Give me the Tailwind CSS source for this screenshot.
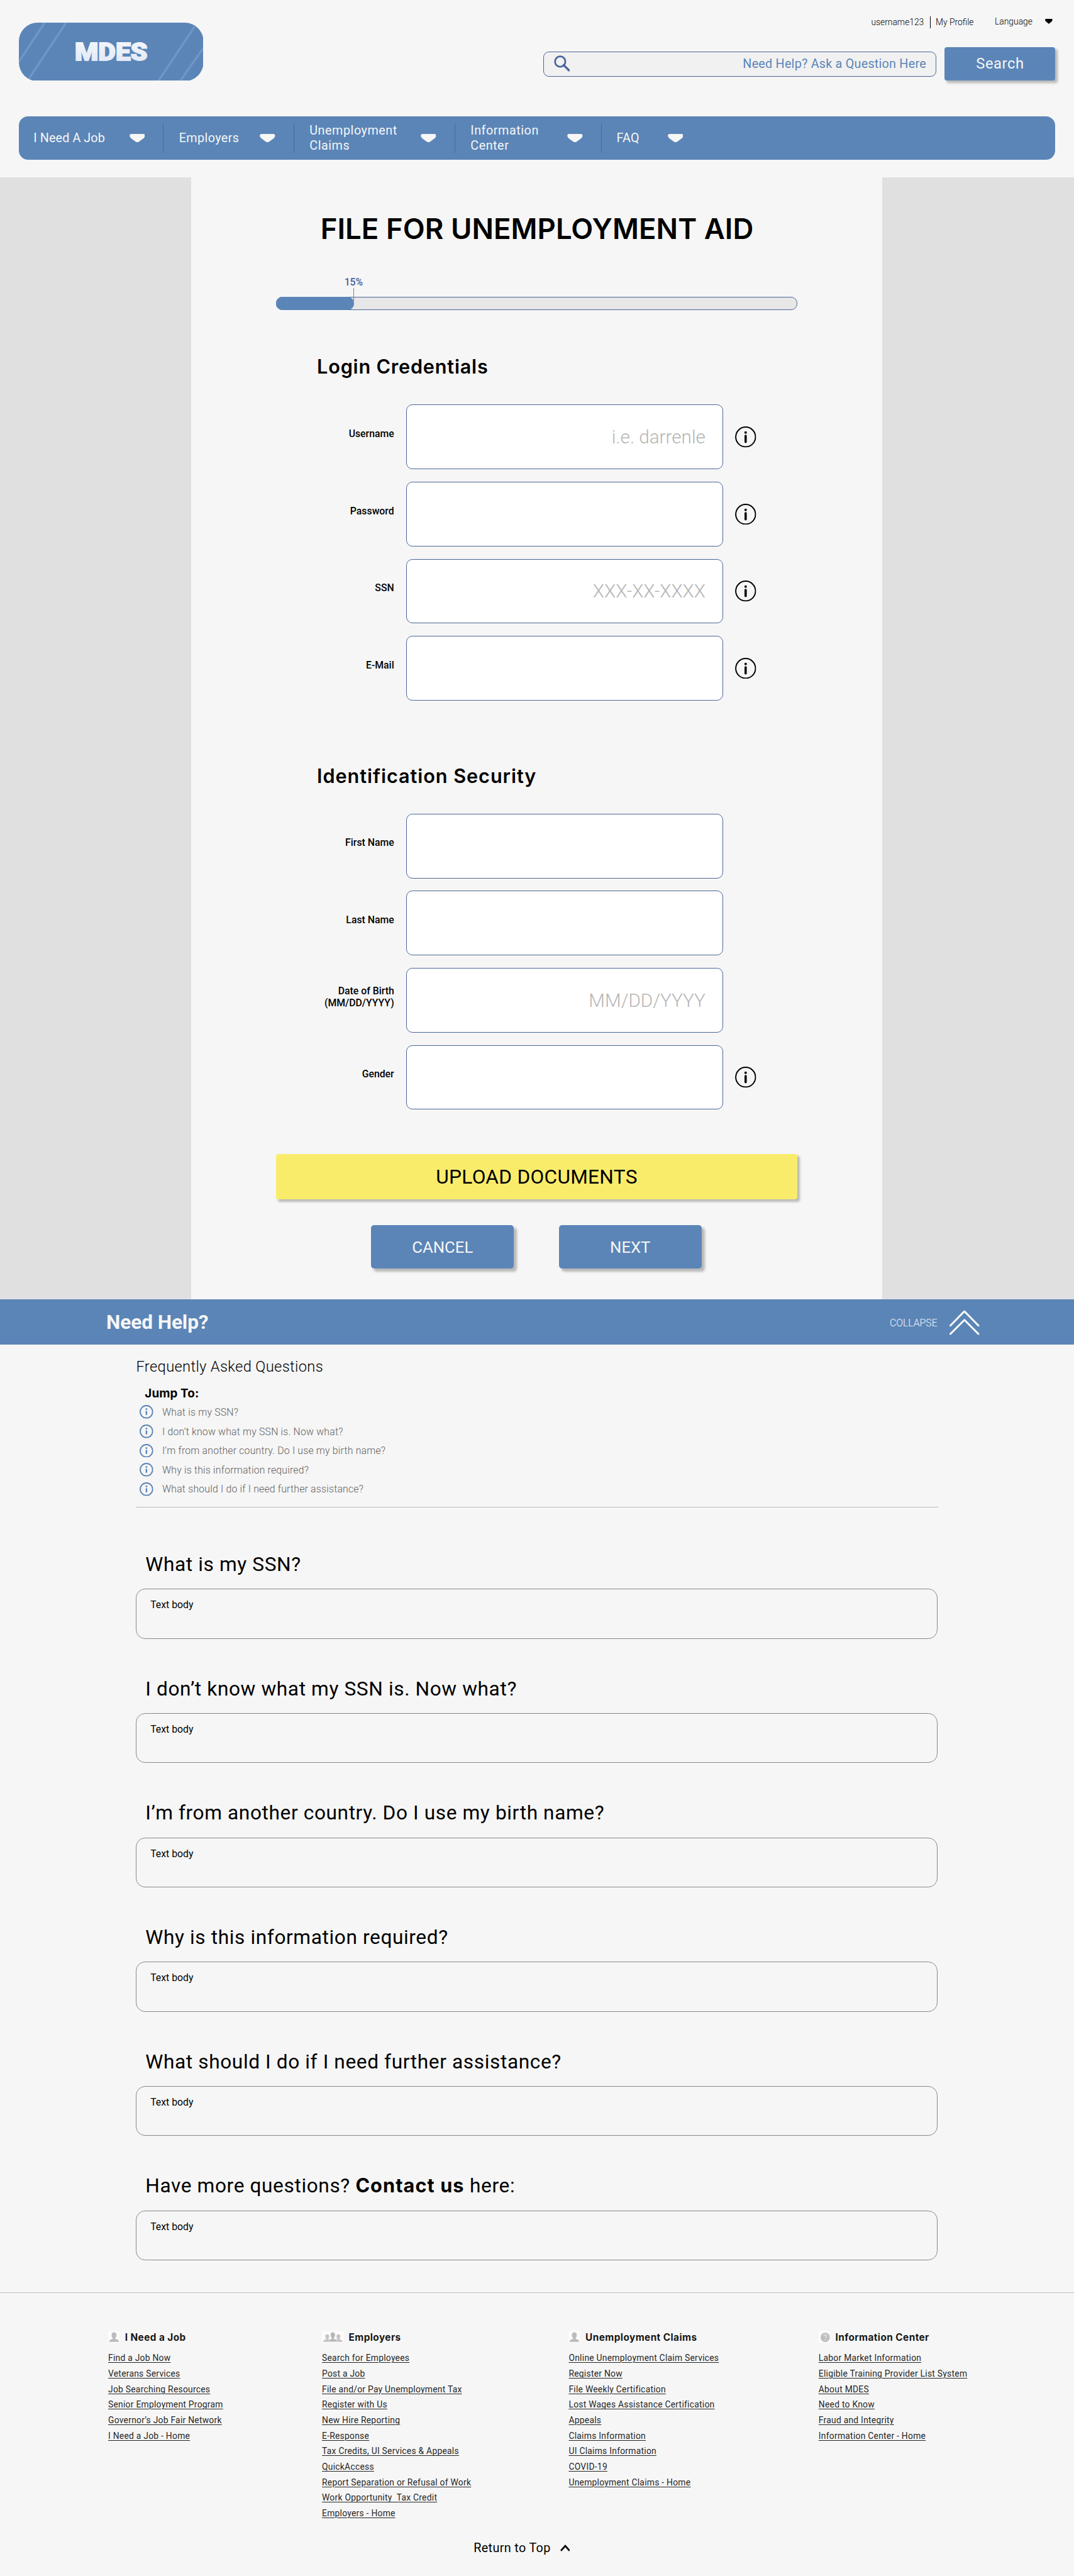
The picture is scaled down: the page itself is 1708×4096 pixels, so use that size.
<!DOCTYPE html>
<html lang="en">
<head>
<meta charset="utf-8">
<title>MDES - File for Unemployment Aid</title>
<script src="https://cdn.jsdelivr.net/npm/@tailwindcss/browser@4"></script>
</head>
<body class="bg-[#f6f6f6] overflow-x-hidden">
<svg class="hidden">
  <symbol id="caret" viewBox="0 0 25 14"><path d="M2.500 0H22.500Q25 0 24.800 3Q24.500 5.500 22.500 7L14.500 13Q12.500 14.600 10.500 13L2.500 7Q.5 5.500 .2 3Q0 0 2.500 0Z" fill="currentColor"/></symbol>
  <symbol id="info" viewBox="0 0 34 34"><circle cx="17" cy="17" r="15.900" fill="none" stroke="currentColor" stroke-width="2"/><circle cx="17" cy="9.900" r="2" fill="currentColor"/><path d="M17 15.300V25" stroke="currentColor" stroke-width="3.600" stroke-linecap="round"/></symbol>
  <symbol id="info-sm" viewBox="0 0 22 22"><circle cx="11" cy="11" r="10" fill="none" stroke="currentColor" stroke-width="1.900"/><circle cx="11" cy="6.700" r="1.500" fill="currentColor"/><path d="M11 9.500V16" stroke="currentColor" stroke-width="2.400"/></symbol>
  <symbol id="person" viewBox="0 0 19 19"><rect width="19" height="19" fill="#fcfcfc"/><path d="M9.500 1.500c2.600 0 4 1.700 4 4.200 0 2-.7 3.900-1.900 5v1.100l4.200 1.800c1 .5 1.400 1.500 1.400 3.400H1.800c0-1.900.4-2.900 1.400-3.400l4.200-1.800v-1.100c-1.200-1.100-1.900-3-1.900-5 0-2.500 1.400-4.200 4-4.200z" fill="#bcbcbc"/></symbol>
  <symbol id="people" viewBox="0 0 35 19"><rect width="35" height="19" fill="#fcfcfc"/><g fill="#c4c4c4"><path d="M8.500 4.500c2 0 3.200 1.300 3.200 3.300 0 1.500-.5 2.900-1.400 3.700v1l3.200 1.400V17H2c0-1.600.3-2.400 1.100-2.800l3.600-1.500v-1.100C5.800 10.800 5.300 9.300 5.300 7.800c0-2 1.200-3.300 3.200-3.300z"/><path d="M26.500 4.500c2 0 3.200 1.300 3.200 3.300 0 1.500-.5 2.900-1.400 3.700v1.100l3.600 1.500c.8.400 1.100 1.200 1.100 2.900H21.500v-3l3.200-1.500v-1c-.9-.8-1.400-2.200-1.400-3.700 0-2 1.200-3.300 3.200-3.300z"/></g><path d="M17.500 1.200c2.600 0 3.900 1.700 3.900 4.200 0 2-.7 3.900-1.900 5v1.300l3.500 1.700c1 .5 1.300 1.400 1.300 3.600H10.700c0-2.200.3-3.100 1.300-3.600l3.500-1.700v-1.300c-1.200-1.100-1.900-3-1.900-5 0-2.500 1.300-4.200 3.900-4.200z" fill="#b8b8b8" stroke="#fcfcfc" stroke-width=".6"/></symbol>
  <symbol id="question" viewBox="0 0 19 19"><rect width="19" height="19" fill="#fcfcfc"/><circle cx="10.500" cy="9.500" r="7.600" fill="#bcbcbc"/><circle cx="10.500" cy="9.500" r="5.700" fill="none" stroke="#d0d0d0" stroke-width=".8"/><path d="M8.500 7.700c0-1.300.9-2 2.100-2s2.100.8 2.100 1.900c0 1.500-1.900 1.600-1.900 3.200" fill="none" stroke="#ececec" stroke-width="1.400"/><circle cx="10.700" cy="13" r=".9" fill="#ececec"/></symbol>
</svg>

<div class="w-[1728px] h-[4143px] [zoom:0.98848] bg-[#f6f6f6] text-black font-['Roboto',sans-serif] overflow-hidden">

  <header class="h-[285px] px-[30px]">
    <div class="flex justify-between h-[187px]">
      <svg class="mt-9 w-[297px] h-[94px]" viewBox="0 0 297 94">
        <defs>
          <clipPath id="pill"><rect width="297" height="94" rx="30"/></clipPath>
          <linearGradient id="ink" x1="0" y1="0" x2="0" y2="1"><stop offset="0" stop-color="#f6f7fb"/><stop offset="1" stop-color="#dfe7f6"/></linearGradient>
        </defs>
        <g clip-path="url(#pill)">
          <rect width="297" height="94" fill="#5b85b7"/>
          <path d="M43.500-3L-2 66M78-3L13.500 94M289-3L221 99M301.500 34L256 99" stroke="#6e97c8" stroke-width="3.500" fill="none"/>
        </g>
        <text x="90" y="61" font-family="Roboto" font-weight="900" font-size="39" textLength="117" lengthAdjust="spacingAndGlyphs" fill="url(#ink)" stroke="url(#ink)" stroke-width="1.800">MDES</text>
      </svg>
      <div class="w-[824px] pt-[26px]">
        <div class="flex justify-end items-center h-5 text-sm font-light pr-[5px]">
          <span>username123</span>
          <span class="w-px h-[19px] bg-black ml-2.5 mr-2"></span>
          <span>My Profile</span>
          <span class="ml-[34px] mb-px">Language</span>
          <svg class="ml-5 w-3 h-[8px] mb-[3px]" viewBox="0 0 25 14" preserveAspectRatio="none"><use href="#caret" width="25" height="14"/></svg>
        </div>
        <div class="flex gap-3.5 mt-[30px]">
          <div class="mt-[7px] w-[632px] h-10 rounded-[9px] border border-[#4a6698] bg-[#f1f1f1] flex items-center justify-between pl-4 pr-[15px]">
            <svg class="w-[26px] h-[26px] mt-[-1px]" viewBox="0 0 26 26" fill="none" stroke="#4a65a0"><circle cx="10" cy="10" r="8.300" stroke-width="2.800"/><path d="M15.500 15.500L24 24" stroke-width="3.400" stroke-linecap="round"/></svg>
            <span class="mt-px text-xl tracking-[0.24px] text-[#5b85b7]">Need Help? Ask a Question Here</span>
          </div>
          <div class="w-[178px] h-[54px] rounded bg-[#5b85b7] text-[#f6f6f6] text-2xl tracking-[0.6px] flex items-center justify-center pt-px shadow-[4px_4px_4px_rgba(0,0,0,0.25)]">Search</div>
        </div>
      </div>
    </div>
    <nav class="flex h-[70px] rounded-[15px] bg-[#5b85b7] text-[#f6f6f6] text-xl leading-6 tracking-[0.4px] items-center">
      <div class="flex items-center justify-between w-[233px] h-12 pl-[24px] pr-[29px] border-r-2 border-[#4a6698]"><span class="mt-px tracking-[0.1px]">I Need A Job</span><svg class="w-[25px] h-[14px]"><use href="#caret"/></svg></div>
      <div class="flex items-center justify-between w-[210px] h-12 pl-[25px] pr-[29px] border-r-2 border-[#4a6698]"><span class="mt-px">Employers</span><svg class="w-[25px] h-[14px]"><use href="#caret"/></svg></div>
      <div class="flex items-center justify-between w-[259px] h-12 pl-[25px] pr-[29px] border-r-2 border-[#4a6698]"><span class="mt-px tracking-[0.55px]">Unemployment<br>Claims</span><svg class="w-[25px] h-[14px]"><use href="#caret"/></svg></div>
      <div class="flex items-center justify-between w-[236px] h-12 pl-[25px] pr-[29px] border-r-2 border-[#4a6698]"><span class="mt-px tracking-[0.55px]">Information<br>Center</span><svg class="w-[25px] h-[14px]"><use href="#caret"/></svg></div>
      <div class="flex items-center justify-between w-[131px] h-12 pl-[24px]"><span class="mt-px tracking-[0.2px]">FAQ</span><svg class="w-[25px] h-[14px]"><use href="#caret"/></svg></div>
    </nav>
  </header>

  <main class="bg-[#e0e0e0] h-[1805px] pl-[308px]">
    <div class="w-[1111px] h-full bg-[#f6f6f6] pt-[55px]">
      <h1 class="text-center text-[46px] leading-[56px] font-['Inter'] font-semibold tracking-[0.050px] pl-px">FILE FOR UNEMPLOYMENT AID</h1>
      <div class="relative ml-[136px] mt-[82px] w-[839px] h-[21px] rounded-[10px] border border-[#4a6698] bg-[#e7e7e7]">
        <div class="absolute -left-px -top-px w-[126px] h-[21px] rounded-[10px] bg-[#5b85b7]"></div>
        <div class="absolute left-[124px] -top-4 w-px h-[22px] bg-[#5b85b7]"></div>
        <div class="absolute left-[104px] top-[-35px] w-10 text-center leading-5 font-medium text-[#4a5f9c]">15%</div>
      </div>
      <h2 class="ml-[202px] mt-[71px] text-[31px] leading-10 font-['Inter'] font-semibold tracking-[0.800px]">Login Credentials</h2>
      <div id="login" class="mt-[41px] grid gap-5"></div>
      <h2 class="ml-[202px] mt-[101px] text-[31px] leading-10 font-['Inter'] font-semibold tracking-[0.950px]">Identification Security</h2>
      <div id="identity" class="mt-[41px] grid gap-5"></div>
      <div class="ml-[136px] mt-[72px] w-[839px] h-[72px] pt-px rounded bg-[#faec6b] flex items-center justify-center text-[32px] tracking-[0.290px] shadow-[4px_4px_4px_rgba(0,0,0,0.25)]">UPLOAD DOCUMENTS</div>
      <div class="flex gap-[72px] ml-[289px] mt-[42px] text-[#f6f6f6] text-[26px]">
        <div class="w-[230px] h-[70px] pt-px rounded-[5px] bg-[#5b85b7] flex items-center justify-center shadow-[5px_5px_4px_rgba(0,0,0,0.25)]">CANCEL</div>
        <div class="w-[230px] h-[70px] pt-px rounded-[5px] bg-[#5b85b7] flex items-center justify-center shadow-[5px_5px_4px_rgba(0,0,0,0.25)]">NEXT</div>
      </div>
    </div>
  </main>

  <section>
    <div class="h-[73px] bg-[#5b85b7] text-[#f6f6f6] flex items-center pl-[171px] pr-[152px]">
      <span class="mt-px text-[32px] font-bold tracking-[-0.100px]">Need Help?</span>
      <span class="ml-auto mt-[3px] font-light">COLLAPSE</span>
      <svg class="ml-5 mt-0.5 w-[48px] h-[42px]" viewBox="0 0 48 42" fill="none" stroke="#fafafa" stroke-width="3" stroke-linecap="round" stroke-linejoin="round"><path d="M1.500 26L24 3L46.500 26M1.500 39.500L24 17L46.500 39.500"/></svg>
    </div>
    <div class="ml-[219px] w-[1290px] pt-[21px]">
      <h3 class="text-2xl leading-[30px] font-light tracking-[0.340px]">Frequently Asked Questions</h3>
      <h4 class="ml-3.5 mt-4 text-[19px] leading-6 font-['Inter'] font-bold tracking-[0.150px]">Jump To:</h4>
      <ul id="jump" class="ml-1.5 mt-[2px] mb-[13px] font-light text-[#606060] tracking-[0.200px]"></ul>
      <hr class="border-0 h-px bg-[#bdbdbd] mb-[72px]">
      <div id="faq" class="grid gap-[60px] w-[1289px]"></div>
    </div>
  </section>

  <footer class="mt-[51px] border-t border-[#bdbdbd] pt-[61px]">
    <div id="links" class="flex items-start h-[337px]"></div>
    <div class="ml-[762px] flex items-center text-xl leading-6 tracking-[0.370px]">Return to Top
      <svg class="ml-[15px] w-4 h-[11px]" viewBox="0 0 16 11" fill="none" stroke="#000" stroke-width="2.800"><path d="M1 10L8 2.200L15 10"/></svg>
    </div>
  </footer>
</div>

<script>
const fieldRow = ([label, hint, info]) => `
  <label class="flex items-center h-[104px]">
    <span class="w-[326px] pb-[9px] text-right text-base leading-[19px] font-medium">${label}</span>
    <input class="ml-5 w-[509px] h-[104px] rounded-[10px] border border-[#4a6698] bg-white pr-[27px] text-right text-[30px] font-light placeholder:text-[#b4b4b4]" placeholder="${hint}">
    ${info ? '<svg class="ml-5 w-[34px] h-[34px]"><use href="#info"/></svg>' : ''}
  </label>`;
document.getElementById('login').innerHTML = [
  ['Username', 'i.e. darrenle', 1], ['Password', '', 1], ['SSN', 'XXX-XX-XXXX', 1], ['E-Mail', '', 1]
].map(fieldRow).join('');
document.getElementById('identity').innerHTML = [
  ['First Name', '', 0], ['Last Name', '', 0], ['Date of Birth<br>(MM/DD/YYYY)', 'MM/DD/YYYY', 0], ['Gender', '', 1]
].map(fieldRow).join('');

const questions = ['What is my SSN?', 'I don’t know what my SSN is. Now what?', 'I’m from another country. Do I use my birth name?', 'Why is this information required?', 'What should I do if I need further assistance?'];
document.getElementById('jump').innerHTML = questions.map(q => `
  <li class="flex items-center h-[31px]"><svg class="w-[22px] h-[22px] text-[#5b85b7]"><use href="#info-sm"/></svg><span class="ml-3.5 mt-px">${q}</span></li>`).join('');
document.getElementById('faq').innerHTML = [...questions, `Have more questions? <b class="font-['Inter'] font-bold text-[31px] leading-none tracking-[1.100px]">Contact us</b> here:`].map(q => `
  <div>
    <h3 class="ml-[15px] h-10 text-[32px] leading-10 tracking-[0.620px]">${q}</h3>
    <div class="mt-[19px] h-20 rounded-[15px] border border-[#888] px-[22px] pt-[15px] leading-5 mb-px">Text body</div>
  </div>`).join('');

document.getElementById('links').innerHTML = [
  ['I Need a Job', '<svg class="w-[19px] h-[19px] mr-2"><use href="#person"/></svg>', 'ml-[174px] w-[344px]',
    ['Find a Job Now', 'Veterans Services', 'Job Searching Resources', 'Senior Employment Program', 'Governor’s Job Fair Network', 'I Need a Job - Home']],
  ['Employers', '<svg class="w-[35px] h-[19px] mr-2"><use href="#people"/></svg>', 'w-[397px]',
    ['Search for Employees', 'Post a Job', 'File and/or Pay Unemployment Tax', 'Register with Us', 'New Hire Reporting', 'E-Response', 'Tax Credits, UI Services &amp; Appeals', 'QuickAccess', 'Report Separation or Refusal of Work', 'Work Opportunity&nbsp; Tax Credit', 'Employers - Home']],
  ['Unemployment Claims', '<svg class="w-[19px] h-[19px] mr-2"><use href="#person"/></svg>', 'w-[402px]',
    ['Online Unemployment Claim Services', 'Register Now', 'File Weekly Certification', 'Lost Wages Assistance Certification', 'Appeals', 'Claims Information', 'UI Claims Information', 'COVID-19', 'Unemployment Claims - Home']],
  ['Information Center', '<svg class="w-[19px] h-[19px] mr-2"><use href="#question"/></svg>', 'w-[300px]',
    ['Labor Market Information', 'Eligible Training Provider List System', 'About MDES', 'Need to Know', 'Fraud and Integrity', 'Information Center - Home']]
].map(([title, icon, box, items]) => `
  <div class="${box}">
    <h5 class="flex items-center text-[15.500px] leading-5 font-['Inter'] font-bold tracking-[0.450px] text-[#161616]">${icon}${title}</h5>
    <ul class="mt-[11px] text-sm leading-[25px] tracking-[0.270px] text-[#262626]">${items.map(t => `<li class="h-[25px]"><a class="underline underline-offset-2 decoration-1">${t}</a></li>`).join('')}</ul>
  </div>`).join('');
</script>
</body>
</html>
